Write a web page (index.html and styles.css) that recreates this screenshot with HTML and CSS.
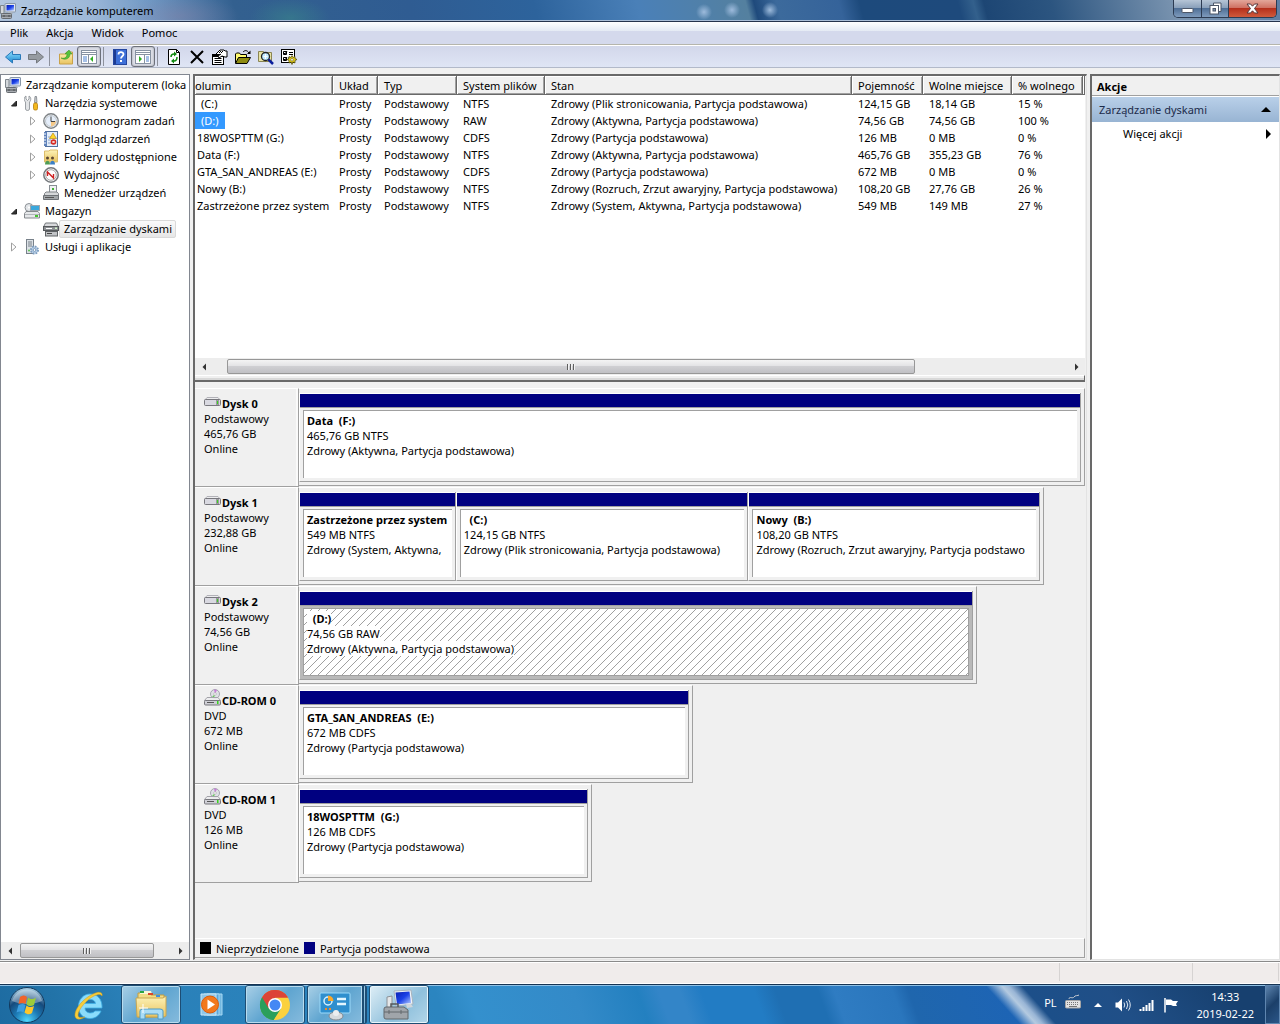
FILE: index.html
```
<!DOCTYPE html>
<html lang="pl">
<head>
  <meta charset="UTF-8">
  <meta name="viewport" content="width=device-width, initial-scale=1.0">
  <title>Zarządzanie komputerem</title>
  <link rel="stylesheet" href="styles.css">
</head>
<body>
  <!-- shared icons -->
  <svg class="defs" width="0" height="0" aria-hidden="true">
    <defs>
      <linearGradient id="gBlue" x1="0" y1="0" x2="0" y2="1"><stop offset="0" stop-color="#8fe0ff"/><stop offset="1" stop-color="#1a86cf"/></linearGradient>
      <linearGradient id="gGray" x1="0" y1="0" x2="0" y2="1"><stop offset="0" stop-color="#f4f4f4"/><stop offset="1" stop-color="#8d9196"/></linearGradient>
      <linearGradient id="gScreen" x1="0" y1="0" x2="1" y2="1"><stop offset="0" stop-color="#0a1fb0"/><stop offset="0.5" stop-color="#1c42e8"/><stop offset="1" stop-color="#b8d0ff"/></linearGradient>
      <linearGradient id="gFolder" x1="0" y1="0" x2="0" y2="1"><stop offset="0" stop-color="#fdf3b8"/><stop offset="1" stop-color="#e9c360"/></linearGradient>
      <radialGradient id="gOrb" cx="0.5" cy="0.95" r="0.9"><stop offset="0" stop-color="#4fd8ff"/><stop offset="0.4" stop-color="#1c79b4"/><stop offset="0.7" stop-color="#164a7c"/><stop offset="1" stop-color="#9cc4dc"/></radialGradient>
    </defs>
    <symbol id="computer" viewBox="0 0 16 16">
      <rect x="5" y="0.500" width="10.500" height="8.500" rx="0.500" fill="#dfe6ee" stroke="#8897a8"/>
      <rect x="6.500" y="2" width="7.500" height="5.500" fill="url(#gScreen)"/>
      <path d="M0.500 2.500h3.500v8h-3.500z" fill="#d4d8dc" stroke="#7f868d"/>
      <path d="M8 9h4l1 2h-5z" fill="#aeb8c2"/>
      <rect x="1.500" y="10.500" width="10" height="5" rx="1" fill="#a9adb2" stroke="#666b70"/>
      <path d="M2 13h9M4 12v2M9 12v2" stroke="#4c5054"/>
    </symbol>
    <symbol id="disk" viewBox="0 0 17 9">
      <path d="M3 0.500h11l2.500 3h-16z" fill="#ececee" stroke="#b2b2b8"/>
      <rect x="0.500" y="2.500" width="16" height="6" rx="1" fill="#d9d9e1" stroke="#77777d"/>
      <rect x="12" y="3" width="3" height="5" fill="#9a9a9e"/><rect x="13" y="4" width="1" height="3" fill="#39d31d"/>
    </symbol>
    <symbol id="cdrom" viewBox="0 0 17 17">
      <circle cx="11" cy="5" r="4.500" fill="#dfe0e6" stroke="#a6a6b0"/>
      <path d="M11 5l-1-4.500 3 0.500z" fill="#c77fd8"/><path d="M11 5l-3 3 2 1z" fill="#66c95b"/>
      <circle cx="11" cy="5" r="1.300" fill="#fff" stroke="#999" stroke-width="0.500"/>
      <path d="M3 8.500h11l2.500 3h-16z" fill="#ececee" fill-opacity="0.900" stroke="#a2a2a8"/>
      <rect x="0.500" y="11.500" width="16" height="4.500" rx="1" fill="#cfcfd6" stroke="#77777d"/>
      <path d="M3 13.500h7" stroke="#555"/><rect x="13" y="12" width="1.500" height="3" fill="#39d31d"/>
    </symbol>
    <symbol id="closed" viewBox="0 0 8 10"><path d="M1.500 1l4.500 4-4.500 4z" fill="#fff" stroke="#a0a0a0"/></symbol>
    <symbol id="opened" viewBox="0 0 8 10"><path d="M6.500 3v5h-5z" fill="#333" stroke="#222"/></symbol>
    <symbol id="left" viewBox="0 0 4 8"><path d="M4 0.500v7l-3.500-3.500z" fill="#333"/></symbol>
    <symbol id="right" viewBox="0 0 4 8"><path d="M0 0.500v7l3.500-3.500z" fill="#333"/></symbol>
  </svg>

  <div class="window">
    <header class="titlebar">
      <svg class="icon"><use href="#computer"/></svg>
      <h1>Zarządzanie komputerem</h1>
      <div class="win-buttons">
        <button class="win-min" aria-label="Minimalizuj"><svg width="13" height="7" viewBox="0 0 13 7"><rect x="1" y="1.500" width="11" height="4" rx="0.500" fill="#fff" stroke="#4d5768"/></svg></button>
        <button class="win-max" aria-label="Przywróć"><svg width="13" height="13" viewBox="0 0 13 13"><path d="M4.500 1h7.500v8.500h-7.500z" fill="#fff" stroke="#4d5768"/><rect x="1" y="3.500" width="8.500" height="8.500" fill="#fff" stroke="#4d5768"/><rect x="4" y="6.500" width="2.500" height="2.500" fill="#7d93b2" stroke="#4d5768"/></svg></button>
        <button class="win-close" aria-label="Zamknij"><svg width="13" height="11" viewBox="0 0 13 11"><path d="M1 1h3.500l2 2.200 2-2.200h3.500l-3.500 4.500 3.500 4.500h-3.500l-2-2.200-2 2.200h-3.500l3.500-4.500z" fill="#fff" stroke="#54383c"/></svg></button>
      </div>
    </header>

    <nav class="menubar">
      <button>Plik</button>
      <button>Akcja</button>
      <button>Widok</button>
      <button>Pomoc</button>
    </nav>

    <div class="toolbar">
      <button class="tool" aria-label="Wstecz"><svg class="icon" viewBox="0 0 16 16"><path d="M0.500 8l7-6v3.500h8v5h-8v3.500z" fill="url(#gBlue)" stroke="#2a78b8"/></svg></button>
      <button class="tool" aria-label="Dalej"><svg class="icon" viewBox="0 0 16 16"><path d="M15.500 8l-7-6v3.500h-8v5h8v3.500z" fill="#969ba1" stroke="#74787d"/></svg></button>
      <span class="sep"></span>
      <button class="tool" aria-label="W górę"><svg class="icon" viewBox="0 0 16 16"><path d="M1.500 5h6l1-2h6v12h-13z" fill="url(#gFolder)" stroke="#c9a24a"/><path d="M3 9c4 1 6-1 6-4h-2l4-4 3 4h-2c0 4-4 7-9 4z" fill="#55c23c" stroke="#338a20" stroke-width="0.500"/></svg></button>
      <button class="tool pressed" aria-label="Drzewo konsoli"><svg class="icon" viewBox="0 0 16 16"><rect x="0.500" y="1.500" width="15" height="13" fill="#fff" stroke="#8792a2"/><path d="M1 3.500h14M1 5.500h14" stroke="#8792a2"/><path d="M7.500 6v8" stroke="#8792a2"/><path d="M2 8h4M2 10h4M2 12h4" stroke="#4f82cf"/><path d="M12 7v6l-3-3z" fill="#2fae24"/></svg></button>
      <span class="sep"></span>
      <button class="tool" aria-label="Pomoc"><svg class="icon" viewBox="0 0 16 16"><rect x="1.500" y="0.500" width="13" height="15" fill="#3d6fd8" stroke="#2446a0"/><path d="M3 1v14" stroke="#1d3a92" stroke-width="2"/><path d="M6.500 5.500c0-3 5-3 5-0.200 0 2-2.500 2-2.500 4.200" fill="none" stroke="#fff" stroke-width="1.800"/><rect x="8" y="11" width="2" height="2" fill="#fff"/></svg></button>
      <button class="tool pressed" aria-label="Okienko akcji"><svg class="icon" viewBox="0 0 16 16"><rect x="0.500" y="1.500" width="15" height="13" fill="#fff" stroke="#8792a2"/><path d="M1 3.500h14M1 5.500h14" stroke="#8792a2"/><path d="M9.500 6v8" stroke="#8792a2"/><path d="M11 8h3M11 10h3M11 12h3" stroke="#4f82cf"/><path d="M4 7v6l3-3z" fill="#2fae24"/></svg></button>
      <span class="sep"></span>
      <button class="tool" aria-label="Odśwież"><svg class="icon" viewBox="0 0 16 16"><path d="M2.500 0.500h8l3 3v12h-11z" fill="#fff" stroke="#000"/><path d="M10.500 0.500v3h3" fill="none" stroke="#000"/><path d="M5 8c0-2 1-3 3-3M11 8c0 3-1 4-3 4" fill="none" stroke="#118a11" stroke-width="1.500"/><path d="M8 2.500v5l3-2.500zM8 9.500v5l-3-2.500z" fill="#118a11"/></svg></button>
      <button class="tool" aria-label="Usuń"><svg class="icon" viewBox="0 0 16 16"><path d="M2 2l12 12M14 2l-12 12" stroke="#000" stroke-width="2"/></svg></button>
      <button class="tool" aria-label="Właściwości"><svg class="icon" viewBox="0 0 16 16"><rect x="0.500" y="5.500" width="11" height="10" fill="#fff" stroke="#000"/><path d="M1 7h10" stroke="#000" stroke-width="2"/><path d="M2.500 9.500h7M2.500 11.500h7M2.500 13.500h7" stroke="#000"/><path d="M4 5l4-4h4l1 1h2v6h-2l-3-1-3 2-1-2 3-2" fill="#fff" stroke="#000"/><path d="M7 4l2-2M9 4l2-2" stroke="#000"/></svg></button>
      <button class="tool" aria-label="Otwórz"><svg class="icon" viewBox="0 0 16 16"><path d="M0.500 14v-9l1-1h3l1 1.500h6v3" fill="#fffa70" stroke="#000"/><path d="M0.500 14.500l3-6h12l-3.500 6z" fill="#8e8b10" stroke="#000"/><path d="M8 3c2-2 4-2 6 1" fill="none" stroke="#000"/><path d="M15.500 1.500v3.500h-3.500z" fill="#000"/></svg></button>
      <button class="tool" aria-label="Znajdź"><svg class="icon" viewBox="0 0 16 16"><path d="M0.500 2.500h5l1 1h7v9h-13z" fill="#e8e3a4" stroke="#8a8552"/><circle cx="7.500" cy="7.500" r="4" fill="#bfeaff" stroke="#222" stroke-width="1.300"/><path d="M7.500 5v5M5.500 7.500h4" stroke="#fff"/><path d="M10.500 10.500l4.500 4.500" stroke="#0a1d9c" stroke-width="2.500"/></svg></button>
      <button class="tool" aria-label="Ustawienia"><svg class="icon" viewBox="0 0 16 16"><rect x="0.500" y="0.500" width="13" height="13" fill="#fff" stroke="#000"/><path d="M2.500 2.500h3v3h-3zM2.500 8.500h3v3h-3z" fill="#fff" stroke="#000"/><path d="M3 4l1 1 2-3M3 10l1 1 2-3" fill="none" stroke="#000"/><path d="M8 3.500h4M8 5.500h4M7 9h2" stroke="#000"/><path d="M11 6.500l1 2 2-1v2l2 1-2 1v2.500l-2-1-1 2.500-1-2.500-2 1v-2.500l-2-1 2-1v-2l2 1z" fill="#e4cf21" stroke="#4b4300" stroke-width="0.700"/><circle cx="11" cy="10.800" r="1.300" fill="#fff" stroke="#4b4300" stroke-width="0.500"/></svg></button>
    </div>

    <main class="content">
      <aside class="pane tree-pane">
        <ul class="tree">
          <li><svg class="icon"><use href="#computer"/></svg><span>Zarządzanie komputerem (loka</span></li>
          <li class="level1"><svg class="twist"><use href="#opened"/></svg><svg class="icon" viewBox="0 0 16 16"><path d="M2 1v3l1.500 1.500L5 4V1c2 1 2.500 4 0.500 6v7c0 2-4 2-4 0V7c-2-2-1.500-5 0.500-6z" fill="#e2e4e6" stroke="#868b90" stroke-width="0.800"/><path d="M11 1.500h1.500l0.500 6h-2.500z" fill="#c9cdd1" stroke="#7b8085" stroke-width="0.800"/><rect x="9.500" y="8" width="4" height="7" rx="1.500" fill="#f3b81d" stroke="#b67d0a" stroke-width="0.800"/></svg><span>Narzędzia systemowe</span></li>
          <li class="level2"><svg class="twist"><use href="#closed"/></svg><svg class="icon" viewBox="0 0 16 16"><circle cx="8" cy="8" r="7.200" fill="#fff" stroke="#7f8488" stroke-width="1.400"/><circle cx="8" cy="8" r="5.500" fill="#e5eefa" stroke="#bcc4cc"/><path d="M8 8v5.500a5.500 5.500 0 0 0 5-5.500z" fill="#f6c987"/><path d="M8 3.500V8.500h4" fill="none" stroke="#444"/></svg><span>Harmonogram zadań</span></li>
          <li class="level2"><svg class="twist"><use href="#closed"/></svg><svg class="icon" viewBox="0 0 16 16"><rect x="2.500" y="0.500" width="12" height="15" fill="#e4edf9" stroke="#52719e"/><rect x="1" y="1" width="3" height="14" fill="#5f82bb"/><path d="M1 3h2M1 6h2M1 9h2M1 12h2" stroke="#fff"/><path d="M5 6h4M5 9h3M5 12h4" stroke="#8aa3ca"/><path d="M10 2l3.500 5.500h-7z" fill="#ffd42a" stroke="#ae8200" stroke-width="0.600"/><circle cx="10.500" cy="11" r="2.800" fill="#d62b22"/><path d="M9.500 10l2 2M11.500 10l-2 2" stroke="#fff"/></svg><span>Podgląd zdarzeń</span></li>
          <li class="level2"><svg class="twist"><use href="#closed"/></svg><svg class="icon" viewBox="0 0 16 16"><path d="M1.500 2h4.500l1-1h7.500v12h-13z" fill="url(#gFolder)" stroke="#dcbc6a"/><circle cx="4.500" cy="9" r="1.500" fill="#5b4632"/><path d="M2 15.500c0-5 5-5 5 0z" fill="#4f9c55"/><circle cx="9.500" cy="9" r="1.500" fill="#5b4632"/><path d="M7 15.500c0-5 5-5 5 0z" fill="#3c7fc4"/></svg><span>Foldery udostępnione</span></li>
          <li class="level2"><svg class="twist"><use href="#closed"/></svg><svg class="icon" viewBox="0 0 16 16"><circle cx="8" cy="8" r="7.200" fill="#fff" stroke="#74787c" stroke-width="1.500"/><circle cx="8" cy="8" r="5.300" fill="#fff" stroke="#a7a7a7"/><path d="M4.500 9v-4l6 6v-4" fill="none" stroke="#cf2222" stroke-width="1.400"/></svg><span>Wydajność</span></li>
          <li class="level2"><span class="twist"></span><svg class="icon" viewBox="0 0 16 16"><rect x="6.500" y="0.500" width="7" height="7" fill="#f0f1f3" stroke="#888e94"/><rect x="9" y="3" width="2" height="2" fill="#42b336"/><path d="M1.500 8.500l1.500-1.500h11l1.500 1.500v3h-14z" fill="#d6d8da" stroke="#808488"/><path d="M0.500 10.500h15v4h-15z" fill="#a3a7aa" stroke="#6e7276"/><path d="M2 12.500h9" stroke="#555"/></svg><span>Menedżer urządzeń</span></li>
          <li class="level1"><svg class="twist"><use href="#opened"/></svg><svg class="icon" viewBox="0 0 16 16"><circle cx="5" cy="4.500" r="4" fill="#e3e6e9" stroke="#8c9196"/><rect x="6.500" y="2.500" width="9" height="5" fill="#3aa7dc" stroke="#9ba5ad"/><circle cx="5" cy="4.500" r="1" fill="#fff"/><path d="M2 8.500h12l1.500 2v4.500h-15v-4.500z" fill="#e6e8ea" stroke="#85898d"/><path d="M1 11.500h14" stroke="#b2b6ba"/><rect x="11" y="12" width="3" height="2" fill="#44c22f"/></svg><span>Magazyn</span></li>
          <li class="level2 selected"><span class="twist"></span><svg class="icon" viewBox="0 0 16 16"><path d="M2.500 2h11l2 4h-15z" fill="#d9dadd" stroke="#75797d"/><rect x="0.500" y="5.500" width="15" height="4" fill="#8d9094" stroke="#56595c"/><path d="M3 7.500h6" stroke="#fff"/><rect x="2.500" y="10.500" width="12" height="4.500" fill="#c2c4c7" stroke="#5f6265"/><path d="M4 12.500h5" stroke="#444"/><rect x="12" y="6.500" width="2" height="1.500" fill="#d5f5cc"/></svg><span>Zarządzanie dyskami</span></li>
          <li class="level1"><svg class="twist"><use href="#closed"/></svg><svg class="icon" viewBox="0 0 16 16"><rect x="2.500" y="0.500" width="7" height="14" fill="#dce1e6" stroke="#78818a"/><path d="M4 3h4M4 5h4M4 7h4" stroke="#78818a"/><circle cx="5" cy="11.500" r="1" fill="#5cc24c"/><circle cx="10.500" cy="11" r="3.600" fill="#b9cfe6" stroke="#7d9dc0" stroke-width="1.800" stroke-dasharray="1.700 1.100"/><circle cx="10.500" cy="11" r="1.400" fill="#fff" stroke="#557da8" stroke-width="0.700"/></svg><span>Usługi i aplikacje</span></li>
        </ul>
        <div class="scrollbar">
          <button aria-label="W lewo"><svg width="4" height="8"><use href="#left"/></svg></button>
          <div class="track"><div class="thumb" style="width: 89%"><i></i></div></div>
          <button aria-label="W prawo"><svg width="4" height="8"><use href="#right"/></svg></button>
        </div>
      </aside>

      <section class="pane center-pane">
        <div class="volumes">
          <table>
            <colgroup>
              <col class="c-name"><col class="c-layout"><col class="c-type"><col class="c-fs"><col class="c-state"><col class="c-size"><col class="c-free"><col class="c-pct"><col>
            </colgroup>
            <thead>
              <tr><th>olumin</th><th>Układ</th><th>Typ</th><th>System plików</th><th>Stan</th><th>Pojemność</th><th>Wolne miejsce</th><th>% wolnego</th><th></th></tr>
            </thead>
            <tbody>
              <tr><td><span class="noname">(C:)</span></td><td>Prosty</td><td>Podstawowy</td><td>NTFS</td><td>Zdrowy (Plik stronicowania, Partycja podstawowa)</td><td>124,15 GB</td><td>18,14 GB</td><td>15 %</td><td></td></tr>
              <tr><td><span class="noname marked">(D:)</span></td><td>Prosty</td><td>Podstawowy</td><td>RAW</td><td>Zdrowy (Aktywna, Partycja podstawowa)</td><td>74,56 GB</td><td>74,56 GB</td><td>100 %</td><td></td></tr>
              <tr><td>18WOSPTTM (G:)</td><td>Prosty</td><td>Podstawowy</td><td>CDFS</td><td>Zdrowy (Partycja podstawowa)</td><td>126 MB</td><td>0 MB</td><td>0 %</td><td></td></tr>
              <tr><td>Data (F:)</td><td>Prosty</td><td>Podstawowy</td><td>NTFS</td><td>Zdrowy (Aktywna, Partycja podstawowa)</td><td>465,76 GB</td><td>355,23 GB</td><td>76 %</td><td></td></tr>
              <tr><td>GTA_SAN_ANDREAS (E:)</td><td>Prosty</td><td>Podstawowy</td><td>CDFS</td><td>Zdrowy (Partycja podstawowa)</td><td>672 MB</td><td>0 MB</td><td>0 %</td><td></td></tr>
              <tr><td>Nowy (B:)</td><td>Prosty</td><td>Podstawowy</td><td>NTFS</td><td>Zdrowy (Rozruch, Zrzut awaryjny, Partycja podstawowa)</td><td>108,20 GB</td><td>27,76 GB</td><td>26 %</td><td></td></tr>
              <tr><td>Zastrzeżone przez system</td><td>Prosty</td><td>Podstawowy</td><td>NTFS</td><td>Zdrowy (System, Aktywna, Partycja podstawowa)</td><td>549 MB</td><td>149 MB</td><td>27 %</td><td></td></tr>
            </tbody>
          </table>
        </div>
        <div class="scrollbar">
          <button aria-label="W lewo"><svg width="4" height="8"><use href="#left"/></svg></button>
          <div class="track scrolled"><div class="thumb" style="width: 82%"><i></i></div></div>
          <button aria-label="W prawo"><svg width="4" height="8"><use href="#right"/></svg></button>
        </div>
        <div class="splitter"></div>

        <div class="disks">
          <div class="disk">
            <div class="disk-label">
              <h2><svg class="disk-icon"><use href="#disk"/></svg>Dysk 0</h2>
              <p>Podstawowy</p><p>465,76 GB</p><p>Online</p>
            </div>
            <div class="parts-row"><div class="parts" style="width: 100%">
              <div class="part" style="flex-grow: 1"><div class="part-body"><h3>Data&nbsp; (F:)</h3><p>465,76 GB NTFS</p><p>Zdrowy (Aktywna, Partycja podstawowa)</p></div></div>
            </div></div>
          </div>
          <div class="disk">
            <div class="disk-label">
              <h2><svg class="disk-icon"><use href="#disk"/></svg>Dysk 1</h2>
              <p>Podstawowy</p><p>232,88 GB</p><p>Online</p>
            </div>
            <div class="parts-row"><div class="parts" style="width: 94.8%">
              <div class="part" style="flex-grow: 149"><div class="part-body"><h3>Zastrzeżone przez system</h3><p>549 MB NTFS</p><p>Zdrowy (System, Aktywna,</p></div></div>
              <div class="part" style="flex-grow: 285"><div class="part-body"><h3>&nbsp; (C:)</h3><p>124,15 GB NTFS</p><p>Zdrowy (Plik stronicowania, Partycja podstawowa)</p></div></div>
              <div class="part" style="flex-grow: 284"><div class="part-body"><h3>Nowy&nbsp; (B:)</h3><p>108,20 GB NTFS</p><p>Zdrowy (Rozruch, Zrzut awaryjny, Partycja podstawo</p></div></div>
            </div></div>
          </div>
          <div class="disk">
            <div class="disk-label">
              <h2><svg class="disk-icon"><use href="#disk"/></svg>Dysk 2</h2>
              <p>Podstawowy</p><p>74,56 GB</p><p>Online</p>
            </div>
            <div class="parts-row"><div class="parts" style="width: 86.2%">
              <div class="part hatched" style="flex-grow: 1"><div class="part-body"><h3>&nbsp; (D:)</h3><p>74,56 GB RAW</p><p>Zdrowy (Aktywna, Partycja podstawowa)</p></div></div>
            </div></div>
          </div>
          <div class="disk">
            <div class="disk-label">
              <h2><svg class="cd-icon"><use href="#cdrom"/></svg>CD-ROM 0</h2>
              <p>DVD</p><p>672 MB</p><p>Online</p>
            </div>
            <div class="parts-row"><div class="parts" style="width: 50.1%">
              <div class="part" style="flex-grow: 1"><div class="part-body"><h3>GTA_SAN_ANDREAS&nbsp; (E:)</h3><p>672 MB CDFS</p><p>Zdrowy (Partycja podstawowa)</p></div></div>
            </div></div>
          </div>
          <div class="disk">
            <div class="disk-label">
              <h2><svg class="cd-icon"><use href="#cdrom"/></svg>CD-ROM 1</h2>
              <p>DVD</p><p>126 MB</p><p>Online</p>
            </div>
            <div class="parts-row"><div class="parts" style="width: 37.3%">
              <div class="part" style="flex-grow: 1"><div class="part-body"><h3>18WOSPTTM&nbsp; (G:)</h3><p>126 MB CDFS</p><p>Zdrowy (Partycja podstawowa)</p></div></div>
            </div></div>
          </div>
        </div>
        <div class="legend">
          <span class="swatch black"></span><span>Nieprzydzielone</span>
          <span class="swatch navy"></span><span>Partycja podstawowa</span>
        </div>
      </section>

      <aside class="pane actions-pane">
        <h2 class="actions-title">Akcje</h2>
        <button class="actions-group"><span>Zarządzanie dyskami</span><svg width="10" height="5" viewBox="0 0 10 5"><path d="M0 5l5-5 5 5z"/></svg></button>
        <button class="actions-item"><span>Więcej akcji</span><svg width="5" height="10" viewBox="0 0 5 10"><path d="M0 0l5 5-5 5z"/></svg></button>
      </aside>
    </main>

    <footer class="statusbar"><span></span><span></span><span></span></footer>
  </div>

  <div class="taskbar">
    <button class="start" aria-label="Start"><svg width="38" height="38" viewBox="0 0 38 38"><circle cx="19" cy="19" r="17.500" fill="url(#gOrb)" stroke="#12395e"/><path d="M4 15a15.500 15.500 0 0 1 30 0c-9 4-21 4-30 0z" fill="#fff" opacity="0.350"/><path d="M12 11c3-2 5-2 7 0l-1.500 7c-2-1.500-4-1.500-7 0z" fill="#f0642a"/><path d="M20 11.500c3 2 5 2 8 0l-2 7.500c-2.500 1.500-5 1.500-7.500-0.500z" fill="#9ccb3a"/><path d="M10.500 19c3-1.500 5-1.500 7 0l-2 7.500c-2-1.500-4-1.500-7 0z" fill="#3c9de0"/><path d="M18.500 19.500c2.500 2 5 2 7.500 0.500l-2 7c-2.500 2-5 1.500-7.500-0.500z" fill="#fcc62b"/></svg></button>
    <button class="task" aria-label="Internet Explorer"><svg width="32" height="32" viewBox="0 0 32 32"><path d="M29 19H12c0 6 8 6 10 3h6c-2 5-6 7.500-11 7.500-7 0-11.500-5-11.500-12S10.500 5 17 5c8 0 12.500 6 12 14zM12 14.500h10.500c-0.500-5.500-10-5.500-10.500 0z" fill="#8bdcfb" stroke="#3fb0e6" stroke-width="0.800"/><path d="M29 7c1-4-3-5-9-2C11 9 1 20 2 27c1 5 7 3 10 1-4 1-7 1-7-2 0-5 9-16 16-19 4-2 7-2 8 0z" fill="#f6cd3b" stroke="#d49a17" stroke-width="0.500"/></svg></button>
    <button class="task open" aria-label="Eksplorator Windows"><svg width="34" height="32" viewBox="0 0 34 32"><path d="M4 4h12l1 2h13v22H4z" fill="#f2dc86" stroke="#c29d3e"/><path d="M6 2h11l1 3H6z" fill="#fbf5d4"/><rect x="6" y="2" width="4" height="2" fill="#2aa543"/><rect x="14" y="4" width="5" height="2" fill="#d8472c"/><rect x="22" y="6" width="4" height="2" fill="#3f8fe0"/><path d="M2 9h27l3-2v20l-2 1H3z" fill="url(#gFolder)" stroke="#c8a650"/><path d="M6 30v-8q0-2 3-2h17q3 0 3 2v8h-5v-5H11v5z" fill="#a9dcf5" stroke="#4f9cc9"/><path d="M9 15v9M5 19h9" stroke="#fff"/></svg></button>
    <button class="task" aria-label="Odtwarzacz"><svg width="28" height="28" viewBox="0 0 28 28"><path d="M8 3h15v21h-15z" fill="#72b7e0" stroke="#a5d8f4"/><path d="M5 3h15v21h-15z" fill="#5ba7d8" stroke="#a5d8f4"/><path d="M2 3h15v21h-15z" fill="#8fc7e8" stroke="#c7e7f7"/><circle cx="11" cy="13.500" r="8.500" fill="#f2791d" stroke="#dd5b0a"/><path d="M8.500 8.500v10l7.500-5z" fill="#fff"/></svg></button>
    <button class="task open" aria-label="Google Chrome"><svg width="32" height="32" viewBox="0 0 32 32"><circle cx="16" cy="16" r="15" fill="#fbd13e"/><path d="M16 16L3 8.500A15 15 0 0 1 29 8.500H16z" fill="#dc4437"/><path d="M3 8.500A15 15 0 0 0 14.500 31L22 19.500 16 16z" fill="#2b9f5c"/><path d="M3 8.500l6.500 11 6.500-11h13a15 15 0 0 0-26 0z" fill="#dc4437"/><path d="M9.500 19.500L3 8.500a15 15 0 0 0 11.500 22.500l6.500-11z" fill="#2b9f5c"/><circle cx="16" cy="16" r="7" fill="#fff"/><circle cx="16" cy="16" r="5.500" fill="#4488f4"/></svg></button>
    <button class="task open stacked" aria-label="Panel sterowania"><svg width="34" height="32" viewBox="0 0 34 32"><rect x="2" y="4" width="30" height="20" rx="1" fill="#2f8fce" stroke="#9cdafa"/><circle cx="10" cy="12" r="4" fill="none" stroke="#d6f1ff" stroke-width="1.500"/><path d="M10 12V6.500a5.500 5.500 0 0 1 5.500 5.500z" fill="#f9a72a"/><path d="M19 10h9M19 15h9" stroke="#e3f6ff" stroke-width="2.500"/><path d="M7 20h2M11 20h2" stroke="#f28a2a" stroke-width="2"/><ellipse cx="18" cy="27" rx="7" ry="4" fill="#d6dade" stroke="#838a91"/><circle cx="18" cy="24" r="3" fill="#eceef0"/></svg></button>
    <button class="task open active" aria-label="Zarządzanie komputerem"><svg width="34" height="32" viewBox="0 0 34 32"><path d="M5 8l5-1v13H5z" fill="#e4e6e8" stroke="#8c9196"/><path d="M12 2l17-1 2 14-17 2z" fill="#eef3f8" stroke="#a8b3be"/><path d="M13.500 3.500l14-1 1.500 11.500-14 1.500z" fill="url(#gScreen)"/><path d="M24 15l5 0 2 3-6 1z" fill="#cfd5db"/><path d="M2 20q0-2 2-2h18l4 3v9H4q-2 0-2-2z" fill="#a0a5aa" stroke="#63686c"/><path d="M9 18v-3h7v3" fill="none" stroke="#54585c" stroke-width="1.500"/><path d="M2 23h24M7 21v4M19 21v4" stroke="#63686c"/></svg></button>

    <div class="tray">
      <span class="lang">PL</span>
      <svg class="icon keyboard" viewBox="0 0 16 14"><path d="M4 4c0-3 4 0 5-2s4-1 5-2" fill="none" stroke="#c8ccd2" stroke-width="1"/><rect x="0.500" y="5.500" width="15" height="7.500" rx="1" fill="#e3e3e3" stroke="#a5a5a5"/><path d="M2 7.500h12M2 9.500h12" stroke="#777" stroke-dasharray="1 1"/><path d="M4 11.500h8" stroke="#777"/></svg>
      <svg class="up" width="8" height="4" viewBox="0 0 8 4"><path d="M0 4l4-4 4 4z" fill="#fff"/></svg>
      <svg class="icon" viewBox="0 0 16 16"><path d="M0.500 5.500h2.500l4-4v13l-4-4h-2.500z" fill="#fff"/><path d="M9 5.500q1.500 2.500 0 5M11.500 4q2.500 4 0 8M13.500 2.500q3.500 5.500 0 11" fill="none" stroke="#dfe8f2"/></svg>
      <svg class="icon" viewBox="0 0 16 16"><path d="M1.500 14v-2M4.500 14v-4M7.500 14v-6M10.500 14v-8M13.500 14v-11" stroke="#fff" stroke-width="2"/></svg>
      <svg class="icon" viewBox="0 0 16 16"><path d="M2 1v14.500" stroke="#fff" stroke-width="1.500"/><path d="M3 2.500h5l2 1.500h5l-2 3 1 2h-4l-2-1h-5z" fill="#fff"/></svg>
      <div class="clock"><time>14:33</time><time>2019-02-22</time></div>
    </div>
    <button class="show-desktop" aria-label="Pokaż pulpit"></button>
  </div>
</body>
</html>
```
FILE: styles.css
```
*, *::before {
  box-sizing: border-box;
}
body {
  margin: 0;
  height: 100vh;
  display: flex;
  flex-direction: column;
  font-family: "Noto Sans", "Open Sans", sans-serif;
  font-size: 11px;
  line-height: 15px;
  color: #000;
  background: #f0f0f0;
  overflow: hidden;
}
button {
  font: inherit;
  color: inherit;
  border: none;
  background: none;
  padding: 0;
  margin: 0;
}
h1, h2, h3, p, ul {
  margin: 0;
  padding: 0;
  font-size: inherit;
}
svg {
  display: block;
  flex: none;
}
.defs {
  position: absolute;
}
.icon {
  width: 16px;
  height: 16px;
}
.window {
  flex: 1;
  min-height: 0;
  display: flex;
  flex-direction: column;
}

/* title bar */
.titlebar {
  height: 22px;
  display: flex;
  align-items: center;
  gap: 5px;
  border-bottom: 1px solid #26344c;
  box-shadow: inset 0 -1px #a9bdd6;
  background:
    radial-gradient(ellipse 60px 20px at 180px 16px, #8a7fa266, transparent),
    radial-gradient(ellipse 40px 20px at 290px 18px, #3a8a8a88, transparent),
    radial-gradient(circle at 704px 12px, #9dbbdc 0, transparent 8px),
    radial-gradient(circle at 732px 10px, #9dbbdc 0, transparent 8px),
    radial-gradient(circle at 770px 10px, #9dbbdc 0, transparent 8px),
    linear-gradient(75deg, #b4c8e0 0, #9db8d8 90px, #6f98c4 150px, #33608f 230px, #2f5c92 400px, #2d639c 520px, #4a80b8 620px, #54809f 725px, #1f4a7c 733px, #3c6a9c 755px, #35639a 815px, #1d4a7c 835px, #1e4a7c 930px, #33608c 945px, #1d4674 955px, #2c5580 1020px, #7a94b0 1140px, #5d7ea4 100%);
}
.titlebar h1 {
  flex: 1;
  font-weight: normal;
}
.win-buttons {
  display: flex;
  align-self: flex-start;
  height: 18px;
  margin-right: 3px;
  border: 1px solid #2c3b52;
  border-top: none;
  border-radius: 0 0 5px 5px;
  overflow: hidden;
}
.win-buttons button {
  display: flex;
  align-items: center;
  justify-content: center;
  background: linear-gradient(#b6c5d6, #8aa0ba 45%, #4f6f96 50%, #7e9bbd);
  border-right: 1px solid #2c3b52;
}
.win-buttons .win-min {
  width: 28px;
  padding-top: 4px;
}
.win-buttons .win-max {
  width: 27px;
}
.win-buttons .win-close {
  width: 47px;
  border-right: none;
  background: linear-gradient(#e3a79a, #cf7263 45%, #b5301c 50%, #cf5a3c);
}

/* menu and toolbar */
.menubar {
  height: 23px;
  display: flex;
  align-items: center;
  padding: 0 1px 2px;
  background: linear-gradient(#fff, #e4eaf4 9px, #d4d9ec 9px);
  border-bottom: 1px solid #b5b5ac;
}
.menubar button {
  padding: 0 9px;
}
.toolbar {
  height: 23px;
  display: flex;
  align-items: center;
  padding-left: 1px;
  background: linear-gradient(#d2d7ea, #dfe5f5);
  border-top: 1px solid #fff;
  border-bottom: 1px solid #b2b9c9;
}
.tool {
  width: 23px;
  height: 21px;
  display: flex;
  align-items: center;
  justify-content: center;
}
.tool.pressed {
  width: 24px;
  border: 1px solid #6d717c;
  border-radius: 3px;
  background: #dcdee6;
  box-shadow: inset 0 0 2px #8b8f9a;
}
.sep {
  width: 1px;
  height: 19px;
  margin: 0 4px 0 2px;
  background: #8d919c;
}

/* panes */
.content {
  flex: 1;
  min-height: 0;
  display: grid;
  grid-template-columns: 190px minmax(0, 1fr) 190px;
  gap: 3px;
  padding: 6px 0 1px;
}
.pane {
  display: flex;
  flex-direction: column;
  min-width: 0;
  overflow: hidden;
  background: #fff;
  border: 1px solid #828790;
}
.tree {
  flex: 1;
  list-style: none;
  padding-top: 1px;
}
.tree li {
  height: 18px;
  display: flex;
  align-items: center;
  padding-left: 4px;
  white-space: nowrap;
}
.tree span {
  padding: 0 0 1px 5px;
}
.tree .level1 {
  padding-left: 9px;
}
.tree .level2 {
  padding-left: 28px;
}
.tree .twist {
  flex: none;
  width: 8px;
  height: 10px;
  padding: 0;
  margin-right: 6px;
}
.tree .selected span:last-child {
  padding: 0 3px 1px 4px;
  border: 1px solid #d9d9d9;
  border-radius: 2px;
  background: linear-gradient(#fafafa, #e6e6e6);
}
.scrollbar {
  flex: none;
  height: 17px;
  display: flex;
  background: #ededed;
}
.scrollbar button {
  width: 17px;
  display: flex;
  align-items: center;
  justify-content: center;
}
.track {
  flex: 1;
  display: flex;
  padding: 1px 2px;
}
.track.scrolled {
  padding-left: 15px;
}
.thumb {
  display: flex;
  align-items: center;
  justify-content: center;
  border: 1px solid #979797;
  border-radius: 2px;
  background: linear-gradient(#f4f4f4, #e3e3e5 45%, #cfcfd2 50%, #c0c0c4);
}
.thumb i {
  width: 8px;
  height: 6px;
  background: repeating-linear-gradient(90deg, #5f5f5f 0 1px, #f2f2f2 1px 2px, transparent 2px 3px);
}

/* volume list */
.center-pane {
  padding: 0 1px 1px 0;
  background: #f0f0f0;
  border: 1px solid #e3e3e3;
  border-top: 2px solid #696969;
  border-left: 2px solid #696969;
}
.volumes {
  flex: none;
  height: 282px;
  background: #fff;
  overflow: hidden;
}
table {
  width: 100%;
  table-layout: fixed;
  border-collapse: separate;
  border-spacing: 0;
}
.c-name { width: 138px; }
.c-layout { width: 45px; }
.c-type { width: 79px; }
.c-fs { width: 88px; }
.c-state { width: 307px; }
.c-size { width: 71px; }
.c-free { width: 89px; }
.c-pct { width: 71px; }
th, td {
  padding: 0 0 0 6px;
  text-align: left;
  font-weight: normal;
  white-space: nowrap;
  overflow: hidden;
}
th {
  height: 19px;
  background: #f0f0f0;
  border-right: 1px solid #696969;
  border-bottom: 1px solid #696969;
  box-shadow: inset 1px 1px #fff, inset -1px -1px #a0a0a0;
}
td {
  height: 17px;
}
th:first-child {
  padding-left: 0;
}
td:first-child {
  padding-left: 2px;
}
th:last-child,
td:last-child {
  padding: 0;
}
.noname {
  display: inline-block;
  height: 17px;
  line-height: 17px;
  margin-left: -2px;
  padding: 0 6px 0 6px;
}
.marked {
  color: #fff;
  background: #3399ff;
}
td:has(.noname) {
  line-height: 0;
}
.splitter {
  flex: none;
  height: 7px;
  border-top: 1px solid #fff;
  border-right: 1px solid #696969;
  border-bottom: 2px solid #696969;
  background: linear-gradient(#f0f0f0 2px, #d9d9d9 2px);
}

/* disks */
.disks {
  flex: 1;
  min-height: 0;
  padding-top: 6px;
  overflow: hidden;
}
.disk {
  height: 99px;
  display: flex;
}
.disk-label {
  flex: none;
  width: 104px;
  padding: 7px 0 0 9px;
  border-top: 1px solid #fff;
  border-right: 1px solid #a0a0a0;
  border-bottom: 1px solid #a0a0a0;
  box-shadow: inset -2px 0 #fafafa;
}
.disk-label h2 {
  height: 15px;
  display: flex;
  align-items: flex-end;
  gap: 1px;
}
.disk-icon {
  width: 17px;
  height: 9px;
  margin-bottom: 5px;
}
.cd-icon {
  width: 17px;
  height: 17px;
  margin-bottom: 2px;
}
.parts-row {
  flex: 1;
  min-width: 0;
}
.parts {
  height: 98px;
  display: flex;
  padding: 4px 3px 3px 0;
  border-top: 1px solid #fff;
  border-right: 1px solid #a0a0a0;
  border-bottom: 1px solid #a0a0a0;
}
.part {
  flex: 1 1 0;
  min-width: 0;
  display: flex;
  flex-direction: column;
  padding: 0 3px 3px;
  border-left: 1px solid #fff;
  border-right: 1px solid #a0a0a0;
  border-bottom: 1px solid #a0a0a0;
}
.part::before {
  content: "";
  height: 15px;
  flex: none;
  margin: 0 -3px 2px;
  background: #000080;
  border-top: 1px solid #fff;
  border-bottom: 1px solid #a0a0a0;
}
.part-body {
  flex: 1;
  padding: 2px 5px 0 3px;
  border-top: 1px solid #a0a0a0;
  border-left: 1px solid #a0a0a0;
  background: #fff;
  white-space: nowrap;
  overflow: hidden;
}
.hatched {
  background: #b9b9b9;
}
.hatched .part-body {
  border: 1px solid #a0a0a0;
  background: #fff linear-gradient(135deg, transparent 46%, #a0a0a0 46%, #a0a0a0 54%, transparent 54%) 0 0 / 8px 8px;
}
.hatched h3,
.hatched p {
  width: fit-content;
  background: #fff;
}
.legend {
  flex: none;
  height: 20px;
  display: flex;
  align-items: center;
  gap: 5px;
  padding-left: 5px;
  border-top: 1px solid #fff;
  border-right: 1px solid #a0a0a0;
  border-bottom: 1px solid #a0a0a0;
}
.swatch {
  width: 11px;
  height: 12px;
}
.black { background: #000; }
.navy { background: #000080; }

/* actions */
.actions-pane {
  border: 1px solid #e3e3e3;
  border-top: 2px solid #696969;
  border-left: 2px solid #696969;
}
.actions-title {
  height: 20px;
  padding: 3px 5px;
  background: #f0f0f0;
  border-bottom: 1px solid #a0a0a0;
}
.actions-group,
.actions-item {
  display: flex;
  align-items: center;
  justify-content: space-between;
  height: 25px;
  padding: 0 8px 0 7px;
}
.actions-group {
  margin-top: 1px;
  background: linear-gradient(#b9d0e9, #98b4d3);
}
.actions-group span {
  color: #1c2b4a;
}
.actions-item {
  height: 23px;
  padding-left: 31px;
}

/* status bar */
.statusbar {
  height: 23px;
  display: flex;
  justify-content: flex-end;
  padding: 1px 1px 2px;
  background: #f0eceb;
  border-top: 1px solid #8a8a8a;
  border-bottom: 1px solid #fff;
  box-shadow: inset 0 1px #fff;
}
.statusbar span {
  width: 133px;
  border-right: 1px solid #d6d3d2;
}
.statusbar span:last-child {
  width: 86px;
}

/* taskbar */
.taskbar {
  flex: none;
  height: 40px;
  display: flex;
  align-items: stretch;
  padding-left: 8px;
  border-top: 1px solid #163352;
  box-shadow: inset 0 1px #8fc0e4;
  color: #fff;
  background:
    linear-gradient(48deg, transparent 758px, #b4cae0 770px, #9ab6d6 775px, #1c4f89 785px, #204f87 845px, #17406f 935px),
    linear-gradient(70deg, #1d6ba1 0, #2273a8 60px, #2a80b8 130px, #2b85c0 420px, #3490cd 450px, #338ac8 550px, #2380c0 610px, #3385c8 630px, #3385c8 650px, #227cc4 670px, #227cc4 720px, #1f6fb3 740px, #1f6fb3 780px, #2f7cc2 795px, #2a76bd 850px, #1f66ad 865px, #1d64b5 960px);
}
.start {
  width: 38px;
  margin-right: 13px;
}
.task {
  width: 60px;
  display: flex;
  align-items: center;
  justify-content: center;
  margin-right: 2px;
}
.open {
  border: 1px solid #1d4d74;
  border-radius: 3px;
  background: linear-gradient(135deg, #a8cfe6, #5fa5d0 50%, #86bbdd);
  box-shadow: inset 0 0 0 1px #b8dcef;
}
.stacked {
  border-right: 5px double #1d4d74;
}
.active {
  background: linear-gradient(135deg, #deeef6, #8fc0dc 60%, #b3d6e9);
  box-shadow: inset 0 0 0 1px #e8f5fb;
}
.tray {
  margin-left: auto;
  display: flex;
  align-items: center;
  gap: 8px;
}
.lang {
  padding-bottom: 4px;
}
.keyboard {
  margin-bottom: 6px;
}
.up {
  margin: 0 5px;
}
.clock {
  display: flex;
  flex-direction: column;
  align-items: center;
  padding: 0 3px 0 10px;
  line-height: 17px;
}
.show-desktop {
  width: 15px;
  margin-left: 8px;
  border: 1px solid #5f86b0;
  background: linear-gradient(135deg, #5d84ae, #1b3f69 50%, #2b5688);
}
```
